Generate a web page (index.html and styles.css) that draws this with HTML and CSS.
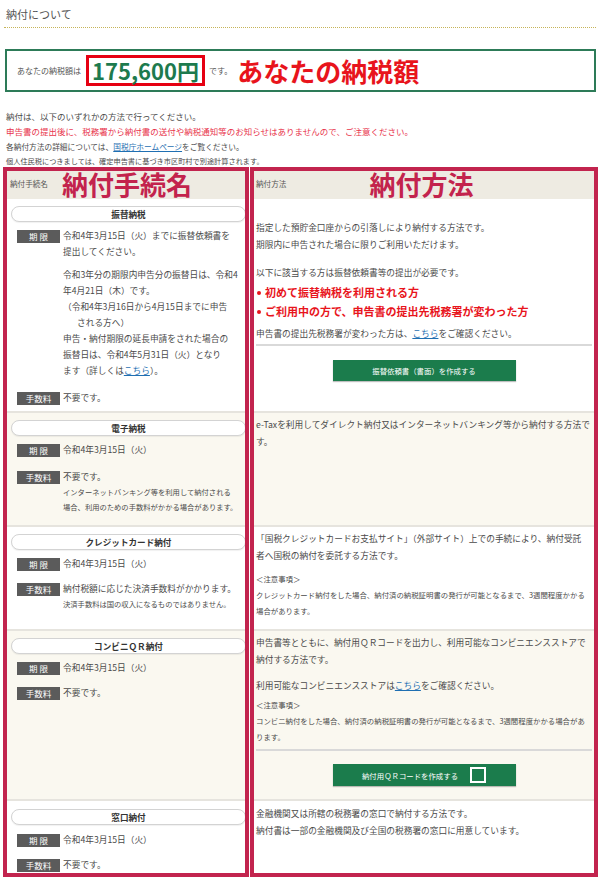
FILE: index.html
```html
<!DOCTYPE html>
<html lang="ja">
<head>
<meta charset="utf-8">
<title>納付について</title>
<link rel="stylesheet" href="styles.css">
</head>
<body>
<div class="page">
  <h2 class="title">納付について</h2>

  <div class="amount">
    <span class="amount-label">あなたの納税額は</span>
    <span class="amount-value">175,600円</span>
    <span class="amount-suffix">です。</span>
    <span class="annot annot-amount">あなたの納税額</span>
  </div>

  <div class="intro">
    <p class="intro-main">納付は、以下のいずれかの方法で行ってください。</p>
    <p class="intro-warn">申告書の提出後に、税務署から納付書の送付や納税通知等のお知らせはありませんので、ご注意ください。</p>
    <p class="intro-sub">各納付方法の詳細については、<a href="#">国税庁ホームページ</a>をご覧ください。</p>
    <p class="intro-note">個人住民税につきましては、確定申告書に基づき市区町村で別途計算されます。</p>
  </div>

  <div class="table">
    <div class="th th-left"><span class="th-label">納付手続名</span><span class="annot annot-th">納付手続名</span></div>
    <div class="th th-right"><span class="th-label">納付方法</span><span class="annot annot-th annot-th-right">納付方法</span></div>

    <!-- 振替納税 -->
    <div class="cell proc proc-first">
      <div class="pill">振替納税</div>
      <div class="item">
        <span class="tag">期 限</span>
        <div class="item-body">
          <p>令和4年3月15日（火）までに振替依頼書を<br>提出してください。</p>
          <p class="para">令和3年分の期限内申告分の振替日は、令和4<br>年4月21日（木）です。</p>
          <p class="paren">（令和4年3月16日から4月15日までに申告<br>される方へ）</p>
          <p>申告・納付期限の延長申請をされた場合の<br>振替日は、令和4年5月31日（火）となり<br>ます（詳しくは<a href="#">こちら</a>）。</p>
        </div>
      </div>
      <div class="item item-fee-wide">
        <span class="tag">手数料</span>
        <div class="item-body"><p>不要です。</p></div>
      </div>
    </div>
    <div class="cell method method-first">
      <p>指定した預貯金口座からの引落しにより納付する方法です。<br>期限内に申告された場合に限りご利用いただけます。</p>
      <p class="gap-l">以下に該当する方は振替依頼書等の提出が必要です。</p>
      <ul class="bullets">
        <li>初めて振替納税を利用される方</li>
        <li>ご利用中の方で、申告書の提出先税務署が変わった方</li>
      </ul>
      <p class="gap-s">申告書の提出先税務署が変わった方は、<a href="#">こちら</a>をご確認ください。</p>
      <hr class="rule">
      <a class="btn" href="#">振替依頼書（書面）を作成する</a>
    </div>

    <!-- 電子納税 -->
    <div class="cell proc alt proc-wide">
      <div class="pill">電子納税</div>
      <div class="item">
        <span class="tag">期 限</span>
        <div class="item-body"><p>令和4年3月15日（火）</p></div>
      </div>
      <div class="item">
        <span class="tag">手数料</span>
        <div class="item-body">
          <p>不要です。</p>
          <p class="note">インターネットバンキング等を利用して納付される<br>場合、利用のための手数料がかかる場合があります。</p>
        </div>
      </div>
    </div>
    <div class="cell method alt">
      <p>e-Taxを利用してダイレクト納付又はインターネットバンキング等から納付する方法で<br>す。</p>
    </div>

    <!-- クレジットカード納付 -->
    <div class="cell proc">
      <div class="pill">クレジットカード納付</div>
      <div class="item">
        <span class="tag">期 限</span>
        <div class="item-body"><p>令和4年3月15日（火）</p></div>
      </div>
      <div class="item">
        <span class="tag">手数料</span>
        <div class="item-body">
          <p>納付税額に応じた決済手数料がかかります。</p>
          <p class="note">決済手数料は国の収入になるものではありません。</p>
        </div>
      </div>
    </div>
    <div class="cell method method-card">
      <p>「国税クレジットカードお支払サイト」（外部サイト）上での手続により、納付受託<br>者へ国税の納付を委託する方法です。</p>
      <p class="small gap-n">＜注意事項＞</p>
      <p class="small">クレジットカード納付をした場合、納付済の納税証明書の発行が可能となるまで、3週間程度かかる<br>場合があります。</p>
    </div>

    <!-- コンビニＱＲ納付 -->
    <div class="cell proc alt">
      <div class="pill">コンビニＱＲ納付</div>
      <div class="item">
        <span class="tag">期 限</span>
        <div class="item-body"><p>令和4年3月15日（火）</p></div>
      </div>
      <div class="item">
        <span class="tag">手数料</span>
        <div class="item-body"><p>不要です。</p></div>
      </div>
    </div>
    <div class="cell method alt method-qr">
      <p>申告書等とともに、納付用ＱＲコードを出力し、利用可能なコンビニエンスストアで<br>納付する方法です。</p>
      <p class="gap-m">利用可能なコンビニエンスストアは<a href="#">こちら</a>をご確認ください。</p>
      <p class="small gap-xs">＜注意事項＞</p>
      <p class="small">コンビニ納付をした場合、納付済の納税証明書の発行が可能となるまで、3週間程度かかる場合があ<br>ります。</p>
      <hr class="rule rule-qr">
      <a class="btn" href="#">納付用ＱＲコードを作成する<span class="qr-icon"></span></a>
    </div>

    <!-- 窓口納付 -->
    <div class="cell proc proc-last">
      <div class="pill">窓口納付</div>
      <div class="item">
        <span class="tag">期 限</span>
        <div class="item-body"><p>令和4年3月15日（火）</p></div>
      </div>
      <div class="item">
        <span class="tag">手数料</span>
        <div class="item-body"><p>不要です。</p></div>
      </div>
    </div>
    <div class="cell method method-last">
      <p>金融機関又は所轄の税務署の窓口で納付する方法です。<br>納付書は一部の金融機関及び全国の税務署の窓口に用意しています。</p>
    </div>

    <div class="frame frame-left"></div>
    <div class="frame frame-right"></div>
  </div>
</div>
</body>
</html>
```

FILE: styles.css
```css
* { box-sizing: border-box; }

html, body {
  margin: 0;
  padding: 0;
  background: #fff;
}

body {
  font-family: "Noto Sans CJK JP", "Noto Sans", sans-serif;
  color: #4a4a4a;
}

p { margin: 0; }

a {
  color: #1f6fb2;
  text-decoration: underline;
}

.page {
  width: 600px;
  padding: 0 4px 0 5px;
}

/* title */
.title {
  margin: 0 0 0 -1px;
  padding: 6px 0 5px 2px;
  font-size: 11px;
  line-height: 16px;
  font-weight: normal;
  color: #555;
  border-bottom: 1px dotted #c6b458;
}

/* amount */
.amount {
  margin-top: 21px;
  height: 43px;
  border: 2px solid #2d7b58;
  display: flex;
  align-items: center;
  padding-left: 10px;
}

.amount-label {
  font-size: 8px;
  color: #555;
}

.amount-value {
  margin-left: 5px;
  border: 3px solid #e60012;
  padding: 0 3px;
  font-size: 22px;
  line-height: 25px;
  font-weight: bold;
  color: #1d7a4e;
}

.amount-suffix {
  margin-left: 4px;
  font-size: 8px;
  color: #555;
}

.annot {
  color: #e8141c;
  font-weight: bold;
  line-height: 1;
}

.annot-amount {
  margin-left: 5px;
  font-size: 26px;
}

/* intro */
.intro {
  margin-top: 17px;
  padding-left: 1px;
}

.intro p {
  line-height: 15px;
}

.intro-main { font-size: 8.5px; }

.intro-warn {
  font-size: 8.5px;
  color: #e8344c;
}

.intro-sub { font-size: 7.7px; }

.intro-note { font-size: 7.2px; }

/* table */
.table {
  position: relative;
  display: grid;
  grid-template-columns: 242px 1fr;
  column-gap: 5px;
  margin-top: -1px;
}

.th {
  height: 31px;
  background: #eeebe2;
  display: flex;
  align-items: center;
}

.th-left { padding-left: 5px; }
.th-right { padding-left: 4px; }

.th-label {
  font-size: 7.6px;
  color: #555;
}

.annot-th {
  color: #c3234d;
  font-size: 26px;
  margin-left: 14px;
}

.annot-th-right { margin-left: 83px; }

.cell {
  border-bottom: 2px solid #e6e4de;
}

.alt { background: #faf8f0; }

/* left column */
.proc {
  padding: 7px 1px 10px 6px;
}

.proc-first { padding-bottom: 5px; }

.pill {
  height: 16px;
  border: 1px solid #d3d3d3;
  border-radius: 8px;
  background: #fff;
  text-align: center;
  font-size: 8.6px;
  font-weight: bold;
  line-height: 14px;
  color: #333;
  margin-bottom: 6px;
  box-shadow: 0 1px 1px rgba(0, 0, 0, 0.06);
}

.proc-last .pill { margin-top: 1px; margin-bottom: 7px; }

.item {
  display: flex;
  align-items: flex-start;
  margin-left: 6px;
}

.item + .item { margin-top: 9px; }

.proc-wide .item + .item { margin-top: 11px; }

.item-fee-wide.item { margin-top: 11px; }

.tag {
  flex: none;
  width: 43px;
  height: 13px;
  margin: 1.5px 3px 0 0;
  background: #5b5b5b;
  color: #fff;
  font-size: 8.5px;
  line-height: 13px;
  text-align: center;
}

.item-body {
  font-size: 8.7px;
  line-height: 16px;
}

.item-body .note {
  font-size: 7.3px;
  line-height: 15px;
}

.para { margin-top: 7px; }

.paren {
  padding-left: 14px;
  text-indent: -14px;
}

/* right column */
.method {
  padding: 3px 4px 8px 4px;
  font-size: 8.7px;
  line-height: 17px;
}

.method-first { padding-top: 20px; }

.method-card { padding-bottom: 10px; }

.method-qr { padding-bottom: 13px; }

.method-last { padding-top: 4px; }

.gap-l { margin-top: 11px; }
.gap-m { margin-top: 9px; }
.gap-n { margin-top: 7px; }
.gap-s { margin-top: 4px; }
.gap-xs { margin-top: 3px; }

.small {
  font-size: 7.4px;
  line-height: 16px;
}

.bullets {
  list-style: none;
  margin: 2px 0 0;
  padding: 0;
  color: #e8141c;
  font-weight: bold;
  font-size: 11px;
  line-height: 19px;
}

.bullets li::before {
  content: "";
  display: inline-block;
  width: 4px;
  height: 4px;
  border-radius: 50%;
  background: currentColor;
  margin: 0 4px 0 1px;
  vertical-align: 2px;
}

.rule {
  border: 0;
  border-top: 2px solid #d9d9d9;
  margin: 2px 0 0;
  height: 0;
}

.rule-qr { margin-top: 4px; }

.btn {
  display: flex;
  align-items: center;
  justify-content: center;
  gap: 12px;
  width: 183px;
  height: 21px;
  margin: 14px auto 0;
  background: #1b7c4c;
  color: #fff;
  font-size: 7.4px;
  text-decoration: none;
  box-shadow: 0 1px 1px rgba(0, 0, 0, 0.25);
}

.method-qr .btn {
  margin-top: 13px;
  height: 22px;
}

.qr-icon {
  width: 16px;
  height: 16px;
  border: 2px solid #fff;
}

/* annotation frames over the table */
.frame {
  position: absolute;
  top: -1px;
  height: 710px;
  border: 4px solid #c2244e;
  pointer-events: none;
}

.frame-left {
  left: -2px;
  width: 246px;
}

.frame-right {
  left: 245px;
  width: 348px;
}
```
